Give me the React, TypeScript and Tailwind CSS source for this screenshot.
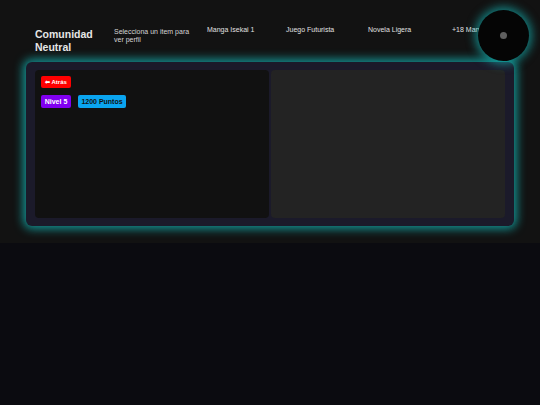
const navItems = [
  { label: "Manga Isekai 1", width: "w-[79px]" },
  { label: "Juego Futurista", width: "w-[82px]" },
  { label: "Novela Ligera", width: "w-[84px]" },
  { label: "+18 Manga", width: "w-[60px]" },
];

function Header() {
  return (
    <header className="flex items-start pl-[35px] pt-[26px]">
      <h1 className="mt-[2px] w-[79px] text-[10.5px] font-bold leading-[13px] text-[#e6e6e6]">
        Comunidad Neutral
      </h1>
      <p className="mt-[2px] w-[93px] pr-[13px] text-[7px] leading-[8px] text-[#d4d4d4]">
        Selecciona un item para ver perfil
      </p>
      <nav className="flex text-[7px] leading-[8px] text-[#e0e0e0]">
        {navItems.map((item) => (
          <span key={item.label} className={`${item.width} whitespace-nowrap`}>
            {item.label}
          </span>
        ))}
      </nav>
    </header>
  );
}

function ProfilePanel() {
  return (
    <div className="flex w-[234px] shrink-0 flex-col items-start gap-[6px] rounded-[4px] bg-[#111111] p-[6px]">
      <button className="h-[12px] w-[30px] rounded-[2px] bg-[#ff0000] text-center text-[6px] font-bold leading-[12px] text-white">
        ⬅ Atrás
      </button>
      <div className="mt-[1px] flex gap-[7px]">
        <span className="h-[13px] w-[30px] rounded-[2px] bg-[#8000f0] text-center text-[7px] font-bold leading-[13px] text-white">
          Nivel 5
        </span>
        <span className="h-[13px] w-[48px] rounded-[2px] bg-[#0aa5f0] text-center text-[7px] font-bold leading-[13px] text-[#111111]">
          1200 Puntos
        </span>
      </div>
    </div>
  );
}

export default function App() {
  return (
    <div
      className="relative min-h-[405px] bg-[#0b0b10]"
      style={{ fontFamily: '"Liberation Sans", Arial, sans-serif' }}
    >
      <section className="bg-[#121212] pb-[17px]">
        <Header />
        <div className="mx-[26px] mt-[8px] flex h-[164px] gap-[2px] rounded-[6px] bg-[#1b1a2a] px-[9px] py-[8px] shadow-[0_0_10px_3px_rgba(20,200,200,0.7)]">
          <ProfilePanel />
          <div className="flex-1 rounded-[4px] bg-[#232323]" />
        </div>
      </section>

      <div className="absolute left-[478px] top-[10px] flex h-[51px] w-[51px] items-center justify-center rounded-full bg-[#050505] shadow-[0_0_10px_3px_rgba(20,200,200,0.6)]">
        <div className="h-[7px] w-[7px] rounded-full bg-[#5f5f5f]" />
      </div>
    </div>
  );
}
